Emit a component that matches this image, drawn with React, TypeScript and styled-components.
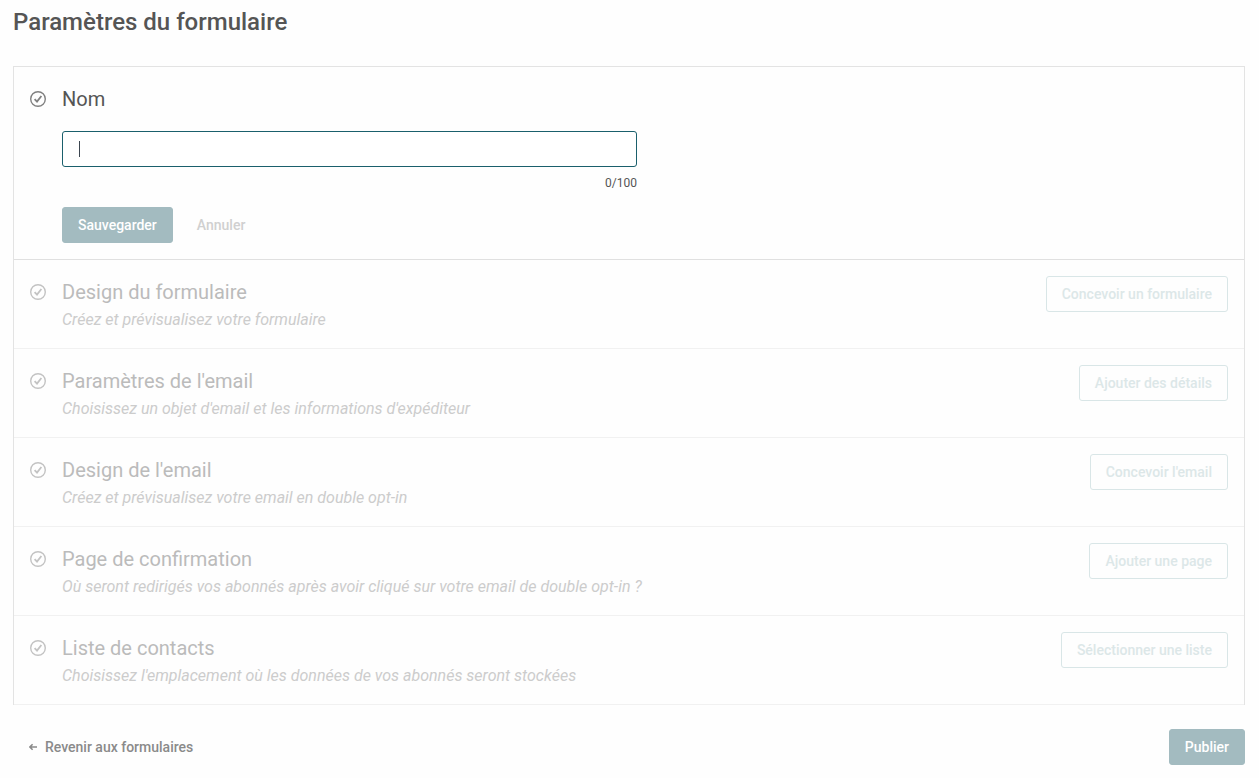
import React, { useState } from "react";
import styled, { createGlobalStyle } from "styled-components";

const GlobalStyle = createGlobalStyle`
  *, *::before, *::after { box-sizing: border-box; }
  body {
    margin: 0;
    background: #fefefe;
    color: #555;
    font-family: Roboto, "Liberation Sans", sans-serif;
    font-size: 16px;
    line-height: 24px;
  }
  h1, h2, p { margin: 0; }
`;

const Page = styled.main`
  padding: 6px 14px 12px 13px;
`;

const Title = styled.h1`
  margin-bottom: 28px;
  font-size: 24px;
  font-weight: 500;
  line-height: 32px;
`;

const Card = styled.div`
  border: 1px solid #e3e3e3;
  border-bottom: 0;
`;

const Row = styled.section<{ $active?: boolean }>`
  display: flex;
  align-items: flex-start;
  padding: 16px;
  border-bottom: 1px solid ${(p) => (p.$active ? "#e0e0e0" : "#f1f1f1")};
`;

const CheckIcon = styled.svg<{ $faded?: boolean }>`
  flex: none;
  width: 16px;
  height: 16px;
  margin: 8px 16px 0 0;
  color: ${(p) => (p.$faded ? "#c3c3c3" : "#808080")};
`;

const RowBody = styled.div`
  flex: 1;
  min-width: 0;
`;

const Heading = styled.h2<{ $faded?: boolean }>`
  color: ${(p) => (p.$faded ? "#bbb" : "#555")};
  font-size: 20px;
  font-weight: 400;
  line-height: 32px;
`;

const Description = styled.p`
  color: #ccc;
  font-style: italic;
`;

const NameForm = styled.form`
  max-width: 575px;
  margin-top: 16px;
`;

const Field = styled.div`
  position: relative;
`;

const Caret = styled.span`
  position: absolute;
  top: 10px;
  left: 17px;
  width: 1px;
  height: 16px;
  background: #3c4650;
  pointer-events: none;
`;

const NameInput = styled.input`
  display: block;
  width: 100%;
  height: 36px;
  padding: 0 16px;
  border: 1px solid #1a5f6c;
  border-radius: 3px;
  outline: 0;
  background: #fff;
  color: #2d3a47;
  caret-color: #2d3a47;
  font: inherit;
  font-size: 14px;

  &:placeholder-shown {
    caret-color: transparent;
  }
`;

const Counter = styled.p`
  margin: 8px 0 16px;
  font-size: 12px;
  line-height: 16px;
  text-align: right;
`;

const Actions = styled.div`
  display: flex;
  gap: 8px;
`;

const Button = styled.button<{ $kind: "filled" | "outline" | "plain" }>`
  flex: none;
  height: 36px;
  padding: 0 15px;
  border: 1px solid
    ${(p) => ({ filled: "#a3bbc0", outline: "#d9e6e7", plain: "transparent" })[p.$kind]};
  border-radius: 3px;
  background: ${(p) => (p.$kind === "filled" ? "#a3bbc0" : "transparent")};
  color: ${(p) => ({ filled: "#fff", outline: "#dce7e8", plain: "#d0d0d0" })[p.$kind]};
  font: inherit;
  font-size: 14px;
  font-weight: 500;
  white-space: nowrap;
`;

const Footer = styled.footer`
  display: flex;
  align-items: center;
  justify-content: space-between;
  padding: 24px 0 0 16px;
`;

const BackLink = styled.a`
  display: inline-flex;
  align-items: center;
  gap: 8px;
  color: #8a8a8a;
  font-size: 14px;
  font-weight: 500;
  text-decoration: none;
`;

const Check = ({ faded }: { faded?: boolean }) => (
  <CheckIcon $faded={faded} viewBox="0 0 16 16" fill="none" stroke="currentColor" aria-hidden="true">
    <circle cx="8" cy="8" r="7.3" strokeWidth="1.4" />
    <path d="M4.6 8.2 7 10.6 11.4 5" strokeWidth="1.8" />
  </CheckIcon>
);

const steps = [
  {
    title: "Design du formulaire",
    text: "Créez et prévisualisez votre formulaire",
    action: "Concevoir un formulaire",
  },
  {
    title: "Paramètres de l'email",
    text: "Choisissez un objet d'email et les informations d'expéditeur",
    action: "Ajouter des détails",
  },
  {
    title: "Design de l'email",
    text: "Créez et prévisualisez votre email en double opt-in",
    action: "Concevoir l'email",
  },
  {
    title: "Page de confirmation",
    text: "Où seront redirigés vos abonnés après avoir cliqué sur votre email de double opt-in ?",
    action: "Ajouter une page",
  },
  {
    title: "Liste de contacts",
    text: "Choisissez l'emplacement où les données de vos abonnés seront stockées",
    action: "Sélectionner une liste",
  },
];

export default function App() {
  const [name, setName] = useState("");

  return (
    <>
      <GlobalStyle />
      <Page>
        <Title>Paramètres du formulaire</Title>
        <Card>
          <Row $active>
            <Check />
            <RowBody>
              <Heading as="label" htmlFor="form-name">
                Nom
              </Heading>
              <NameForm onSubmit={(e) => e.preventDefault()}>
                <Field>
                  <NameInput
                    id="form-name"
                    type="text"
                    placeholder=" "
                    maxLength={100}
                    autoFocus
                    autoComplete="off"
                    value={name}
                    onChange={(e) => setName(e.target.value)}
                  />
                  {!name && <Caret aria-hidden="true" />}
                </Field>
                <Counter>{name.length}/100</Counter>
                <Actions>
                  <Button $kind="filled" type="submit" disabled={!name}>
                    Sauvegarder
                  </Button>
                  <Button $kind="plain" type="button" disabled={!name}>
                    Annuler
                  </Button>
                </Actions>
              </NameForm>
            </RowBody>
          </Row>
          {steps.map((step) => (
            <Row key={step.title}>
              <Check faded />
              <RowBody>
                <Heading $faded>{step.title}</Heading>
                <Description>{step.text}</Description>
              </RowBody>
              <Button $kind="outline" type="button" disabled>
                {step.action}
              </Button>
            </Row>
          ))}
        </Card>
        <Footer>
          <BackLink href="#formulaires">
            <svg width="8" height="8" viewBox="0 0 8 8" fill="none" stroke="currentColor" strokeWidth="1.6" aria-hidden="true">
              <path d="M8 4H1M3.6 1.2.9 4l2.7 2.8" />
            </svg>
            Revenir aux formulaires
          </BackLink>
          <Button $kind="filled" type="button" disabled>
            Publier
          </Button>
        </Footer>
      </Page>
    </>
  );
}
